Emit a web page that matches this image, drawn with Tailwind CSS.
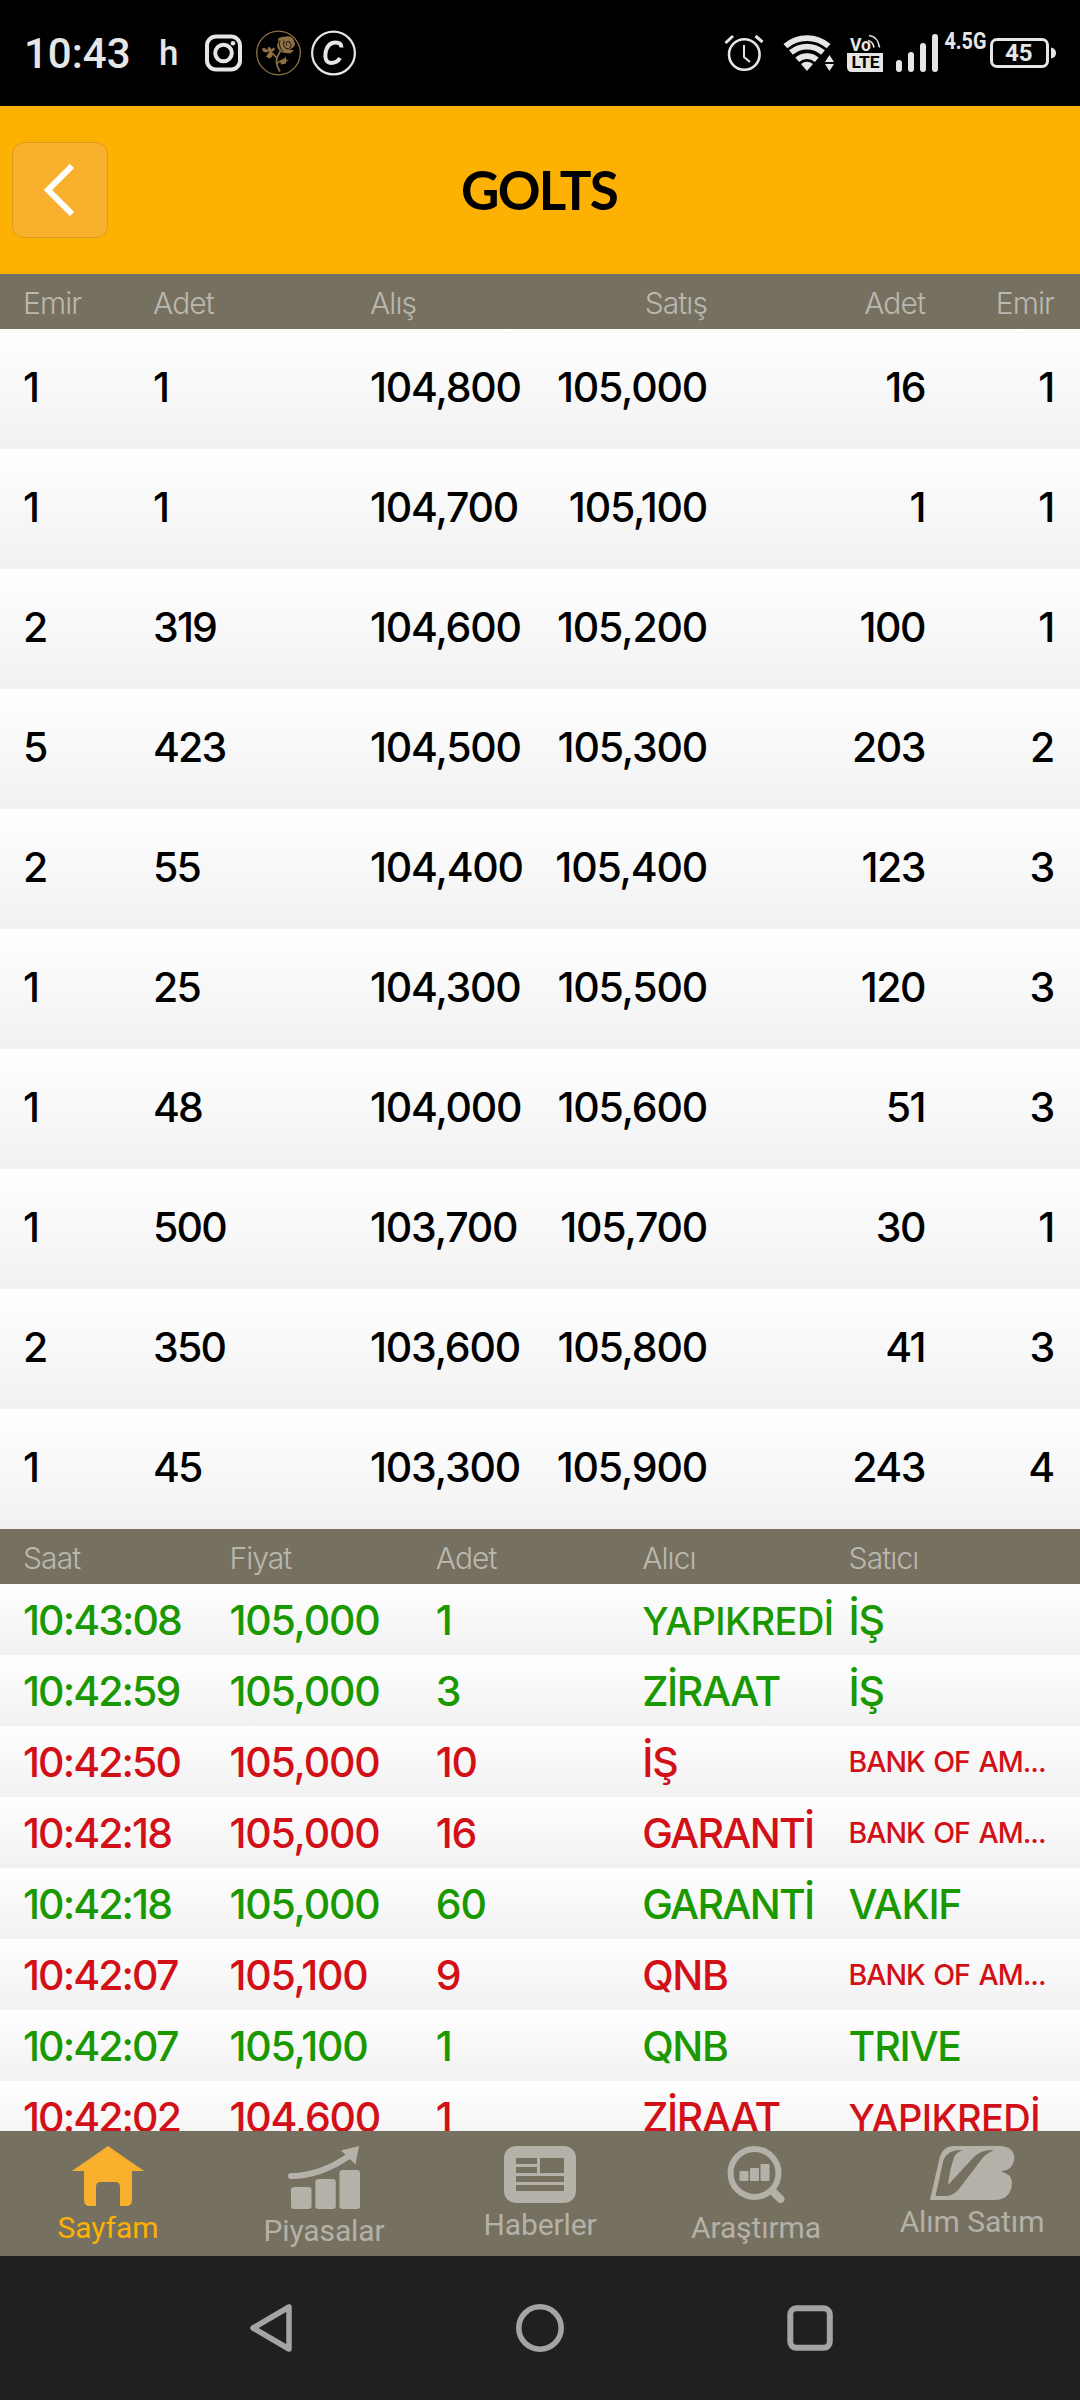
<!DOCTYPE html>
<html lang="tr">
<head>
<meta charset="utf-8">
<title>GOLTS</title>
<script src="https://cdn.jsdelivr.net/npm/@tailwindcss/browser@4"></script>
</head>
<body class="bg-[#202020]">
<div class="w-[1080px] h-[2400px] flex flex-col overflow-hidden font-['Inter',sans-serif]">

  <!-- Status bar -->
  <div class="h-[106px] shrink-0 bg-black flex items-center justify-between text-[#e6e6e6] font-['Roboto',sans-serif]">
    <div class="flex items-center pl-6">
      <span class="w-[135px] text-[42px] font-medium leading-none pt-0.5">10:43</span>
      <span class="w-[44px] text-[35px] font-medium leading-none">h</span>
      <svg class="w-[42px] h-[46px]" viewBox="203 29.5 42 46" fill="none" stroke="#e6e6e6" stroke-width="4"><rect x="207" y="36" width="33" height="33" rx="9"/><circle cx="223.5" cy="52.5" r="8.3"/><circle cx="233" cy="42.7" r="2.3" fill="#e6e6e6" stroke="none"/></svg>
      <svg class="w-[57px] h-[46px]" viewBox="245 29.5 57 46" fill="none" stroke="#8f7045">
        <circle cx="278.5" cy="52.5" r="21.8" stroke-width="1.3"/>
        <path d="M280 71q-5-8-3-14q2-4 3-6M277 63q2-3 8-3M276 57q-2-4-7-6" stroke-width="1.7"/>
        <g fill="#8f7045" stroke="none"><path d="M278 38q1 4-1 6q0 5 5 8l8 1l4-3l-5-1q6-2 6-6l-2-5q-3-3-7-2q-5 0-8 2z"/><path d="M269 46q-3 2 0 6l4-1q3-2 1-4q-2 0-2 2zM262 48q3-2 7 3l-3 1l-3-1zM266 56l3-4l4 1q0 4-4 5zM280 60l4-2l2-2l0 3l3 1l-3 1l0 2l-5 1z"/></g>
        <path d="M280 40q-2 6 3 11M284 40q-2 5 2 8q5 1 5-4q-1-4-4-3q-2 2 0 4" stroke="#000" stroke-width="0.8"/>
      </svg>
      <svg class="w-[56px] h-[46px]" viewBox="302 29.5 56 46" fill="none" stroke="#e6e6e6"><circle cx="333.5" cy="52.5" r="21.4" stroke-width="2.2"/><path d="M341.500 47q0-5-6-5q-7 0-9.500 8q-2.500 12 5 12.500q6 0 9-5" stroke-width="4"/></svg>
    </div>
    <div class="flex items-center">
      <svg class="w-[58px] h-[46px]" viewBox="722 30 58 46" fill="none" stroke="#e6e6e6"><circle cx="744.3" cy="54.500" r="15.300" stroke-width="2.600"/><path d="M744 45v12l6 5" stroke-width="2"/><path d="M725.500 43l7.500-7M762.500 42l-7-6" stroke-width="3"/></svg>
      <svg class="w-[65px] h-[46px]" viewBox="780 30 65 46" fill="none" stroke="#e6e6e6" stroke-width="5.8"><path d="M785.400 46.100a33 33 0 0 1 43.200 0M791 52.500a24.500 24.500 0 0 1 32 0M797.200 59.700a15 15 0 0 1 19.600 0"/><path d="M807 71l-6-7q6-4.500 12 0zM829.500 55l4.500 7h-9zM829.500 71l4.500-7h-9z" fill="#e6e6e6" stroke="none"/></svg>
      <svg class="w-[45px] h-[46px]" viewBox="845 30 45 46"><path d="M847 53h36v19h-31q-5 0-5-5z" fill="#e6e6e6"/><text x="851.500" y="68" font-family="Roboto" font-weight="700" font-size="16.500" textLength="28" lengthAdjust="spacingAndGlyphs" fill="#000">LTE</text><text x="850" y="51" font-family="Roboto" font-weight="700" font-size="18" textLength="21" lengthAdjust="spacingAndGlyphs" fill="#e6e6e6">Vo</text><path d="M868 40.500q5 1 6 7M869 35.500q9 1 10.500 12" fill="none" stroke="#e6e6e6" stroke-width="1.700"/></svg>
      <svg class="w-[52px] h-[46px]" viewBox="890 30 52 46" stroke="#e6e6e6" stroke-width="6" stroke-linecap="round"><path d="M899 63v6M911 55v14M923 46v23M935 37v32"/></svg>
      <svg class="w-[46px] h-[46px] overflow-visible" viewBox="942 30 46 46"><text x="944.500" y="48.800" font-family="Roboto" font-weight="700" font-size="23" textLength="42" lengthAdjust="spacingAndGlyphs" fill="#e6e6e6">4.5G</text></svg>
      <svg class="w-[92px] h-[46px]" viewBox="988 30 92 46"><rect x="991.500" y="39.500" width="56" height="27" rx="5.500" fill="none" stroke="#e6e6e6" stroke-width="3"/><path d="M1051 47.500q5 1 5 5.500t-5 5.500z" fill="#e6e6e6"/><text x="1005" y="61" font-family="Roboto" font-weight="700" font-size="24" fill="#e6e6e6">45</text></svg>
    </div>
  </div>

  <!-- Title bar -->
  <header class="h-[168px] shrink-0 bg-[#fdb102] grid grid-cols-[96px_1fr_98px] items-center px-3">
    <button class="size-24 rounded-xl bg-[#f9b02d] border border-[#db9b1d] flex items-center justify-center pr-0.5">
      <svg class="w-[30px] h-[52px]" viewBox="0 0 30 52" fill="none" stroke="#fff" stroke-width="6"><path d="M28 2L4 26l24 24"/></svg>
    </button>
    <h1 class="text-center text-[53px] leading-none font-bold tracking-[-1.8px] pb-0.5 font-['Lato',sans-serif]">GOLTS</h1>
  </header>

  <!-- Order book -->
  <div class="h-[55px] shrink-0 bg-[#767060] pl-[23px] pt-[3px] grid grid-cols-[130px_217px_170px_167px_218px_129px] items-center text-[30px] font-light tracking-[-0.9px] text-[#bbb8b0]">
    <span>Emir</span><span>Adet</span><span>Alış</span><span class="text-right">Satış</span><span class="text-right">Adet</span><span class="text-right">Emir</span>
  </div>
  <div id="book" class="shrink-0 flex flex-col"></div>

  <!-- Trades -->
  <div class="h-[55px] shrink-0 bg-[#767060] pl-[23px] pr-[25px] pt-[3px] grid grid-cols-5 items-center text-[30px] font-light tracking-[-0.9px] text-[#bbb8b0]">
    <span>Saat</span><span>Fiyat</span><span>Adet</span><span>Alıcı</span><span>Satıcı</span>
  </div>
  <div id="trades" class="h-[547px] shrink-0 overflow-hidden flex flex-col"></div>

  <!-- Tabs -->
  <nav class="h-[125px] shrink-0 bg-[#767060] grid grid-cols-5 items-start pt-[15px] text-[30px] leading-[35px] tracking-[-0.1px] text-[#b4b1a8] font-['Roboto',sans-serif]">
    <div class="flex flex-col items-center gap-1 text-[#fdb102]">
      <svg class="w-[72px] h-[60px]" viewBox="0 0 72 60" fill="#f9b02d"><path d="M36 0l36 25H60v29q0 6-6 6h-6V41q0-5-5-5H29q-5 0-5 5v19h-6q-6 0-6-6V25H0z"/></svg>
      <span>Sayfam</span>
    </div>
    <div class="flex flex-col items-center gap-1">
      <svg class="w-[72px] h-[63px]" viewBox="0 0 72 63" fill="currentColor"><rect x="3" y="41" width="20.500" height="22" rx="3"/><rect x="27.300" y="33" width="20.500" height="30" rx="3"/><rect x="51.500" y="24" width="20.500" height="39" rx="3"/><path d="M3 30Q32 30 61 10" fill="none" stroke="currentColor" stroke-width="6" stroke-linecap="round"/><path d="M71 0L67.500 18.500L53 4.500z"/></svg>
      <span>Piyasalar</span>
    </div>
    <div class="flex flex-col items-center gap-1">
      <svg class="w-[72px] h-[57px]" viewBox="0 0 72 57"><rect width="72" height="57" rx="12" fill="currentColor"/><path d="M12 12h21v6H12zM12 21h21v6H12zM36 12h24v15H36zM12 30h48v6H12zM12 39h48v6H12z" fill="#767060"/></svg>
      <span>Haberler</span>
    </div>
    <div class="flex flex-col items-center gap-1">
      <svg class="w-[58px] h-[60px]" viewBox="0 0 58 60" fill="currentColor"><g fill="none" stroke="currentColor"><circle cx="27.500" cy="27" r="24" stroke-width="6"/><path d="M46 45.500l7.500 7.500" stroke-width="8" stroke-linecap="round"/></g><rect x="12.500" y="25" width="9" height="10" rx="1"/><rect x="23" y="22" width="9" height="13" rx="1"/><rect x="33.500" y="18" width="9" height="17" rx="1"/></svg>
      <span>Araştırma</span>
    </div>
    <div class="flex flex-col items-center gap-1">
      <svg class="w-[85px] h-[54px]" viewBox="0 0 85 54"><path d="M0 54L9.500 12Q13 0 24 0H71Q84.500 1 84.300 13Q83 24 71 25.500Q82 28 82 37Q81 53 66 54z" fill="currentColor"/><path d="M5.500 50L13.500 14Q18 3 32.500 4Q25 7 24 12Q20 22 18 39L43 12Q51 3 64 4Q55 8 51 14L29 43Q23 50 16 50z" fill="#767060"/></svg>
      <span>Alım Satım</span>
    </div>
  </nav>

  <!-- System navigation -->
  <div class="h-36 shrink-0 bg-[#202020] grid grid-cols-[1fr_270px_1fr] items-center px-[135px]">
    <svg class="w-[54px] h-12 justify-self-center" viewBox="0 0 54 48" fill="none" stroke="#a4a4a4" stroke-width="5.500" stroke-linejoin="round"><path d="M46 3v42L10 24z"/></svg>
    <svg class="size-12 justify-self-center" viewBox="0 0 48 48" fill="none" stroke="#a4a4a4" stroke-width="5.500"><circle cx="24" cy="24" r="21.200"/></svg>
    <svg class="size-12 justify-self-center" viewBox="0 0 48 48" fill="none" stroke="#a4a4a4" stroke-width="6"><rect x="4.300" y="4.300" width="39.500" height="39.500" rx="6"/></svg>
  </div>
</div>

<script>
const book = [
  ['1','1','104,800','105,000','16','1'],
  ['1','1','104,700','105,100','1','1'],
  ['2','319','104,600','105,200','100','1'],
  ['5','423','104,500','105,300','203','2'],
  ['2','55','104,400','105,400','123','3'],
  ['1','25','104,300','105,500','120','3'],
  ['1','48','104,000','105,600','51','3'],
  ['1','500','103,700','105,700','30','1'],
  ['2','350','103,600','105,800','41','3'],
  ['1','45','103,300','105,900','243','4'],
];
const bookCell = [
  '', 'tracking-[-1.8px]', '',
  'text-right', 'text-right tracking-[-1.5px]', 'text-right',
];
document.getElementById('book').innerHTML = book.map(r =>
  `<div class="h-[120px] pl-[23px] pb-[3px] grid grid-cols-[130px_217px_170px_167px_218px_129px] items-center bg-linear-to-b from-white to-[#f1f1f1] text-[41px] leading-none font-medium tracking-[-1.2px] text-black">` +
  r.map((v, i) => `<span class="${bookCell[i]}">${v}</span>`).join('') + `</div>`).join('');

const trades = [
  ['up','10:43:08','105,000','1','YAPIKREDİ','İŞ'],
  ['up','10:42:59','105,000','3','ZİRAAT','İŞ'],
  ['down','10:42:50','105,000','10','İŞ','BANK OF AM...'],
  ['down','10:42:18','105,000','16','GARANTİ','BANK OF AM...'],
  ['up','10:42:18','105,000','60','GARANTİ','VAKIF'],
  ['down','10:42:07','105,100','9','QNB','BANK OF AM...'],
  ['up','10:42:07','105,100','1','QNB','TRIVE'],
  ['down','10:42:02','104,600','1','ZİRAAT','YAPIKREDİ'],
];
const nameStyle = {
  'YAPIKREDİ': 'text-[38px] tracking-[-0.6px]',
  'BANK OF AM...': 'text-[28.5px] tracking-[-1px] [word-spacing:2px]',
  'GARANTİ': 'tracking-[-1.7px]',
  'ZİRAAT': 'tracking-[-1.4px]',
  'QNB': 'tracking-[-1.4px]',
};
document.getElementById('trades').innerHTML = trades.map(([dir, time, price, qty, buyer, seller]) =>
  `<div class="h-[71px] shrink-0 pl-[23px] pr-[25px] pt-0.5 grid grid-cols-5 items-center whitespace-nowrap bg-linear-to-b from-white to-[#f1f1f1] text-[41px] leading-none font-medium tracking-[-1.2px] ${dir === 'up' ? 'text-[#1a9800]' : 'text-[#d21018]'}">` +
  `<span class="tracking-[-1.9px]">${time}</span><span>${price}</span><span>${qty}</span>` +
  `<span class="${nameStyle[buyer] || ''}">${buyer}</span><span class="${nameStyle[seller] || ''}">${seller}</span></div>`).join('');
</script>
</body>
</html>
